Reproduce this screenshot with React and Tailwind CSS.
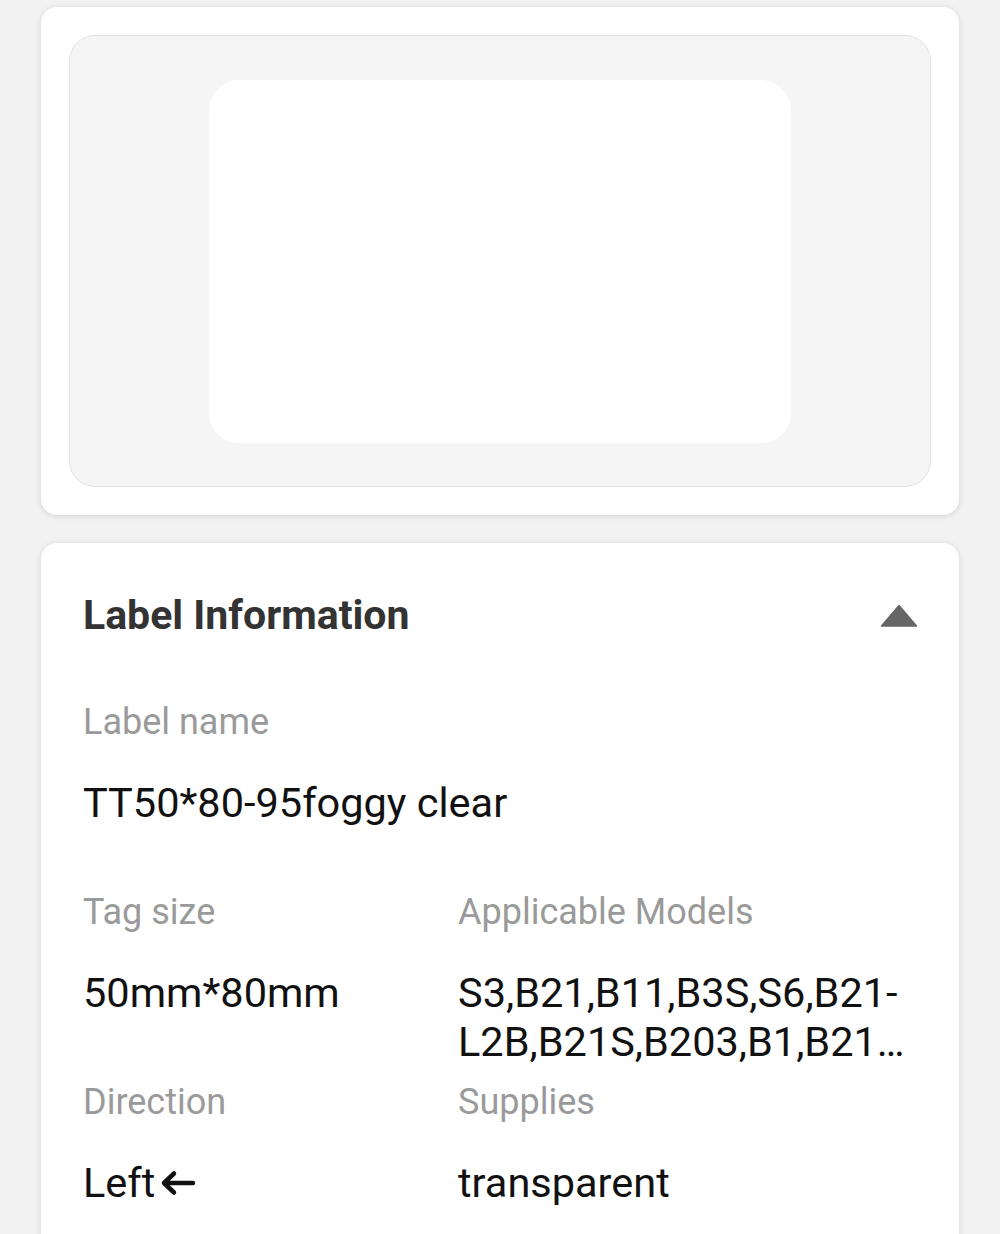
import React from "react";

function Item({ label, children, className = "" }) {
  return (
    <div className={"flex flex-col h-[190px] " + className}>
      <div className="text-[36px] leading-[44px] text-[#9a9a9a]">{label}</div>
      <div className="mt-[34px] text-[41.5px] leading-[49px] text-[#111111]">{children}</div>
    </div>
  );
}

export default function App() {
  return (
    <div
      className="min-h-[1234px] w-[1000px] bg-[#f2f2f2] px-[41px] pt-[7px] pb-[40px]"
      style={{ fontFamily: "Roboto, 'Noto Sans', sans-serif" }}
    >
      <div className="h-[508px] rounded-[16px] bg-white p-[28px] shadow-[0_1px_6px_rgba(0,0,0,0.13)]">
        <div className="flex h-full items-center justify-center rounded-[26px] border border-[#e2e2e2] bg-[#f5f5f5]">
          <div className="h-[363px] w-[582px] rounded-[30px] bg-white" />
        </div>
      </div>

      <div className="mt-[28px] rounded-[16px] bg-white px-[42px] pt-[48px] pb-[40px] shadow-[0_1px_6px_rgba(0,0,0,0.13)]">
        <div className="flex items-center justify-between">
          <div className="text-[41px] font-bold leading-[48px] text-[#333333]">Label Information</div>
          <svg width="38" height="23" viewBox="0 0 38 23" className="mr-[-1px]">
            <path d="M19 1.5 L36.5 22 L1.5 22 Z" fill="#666666" stroke="#666666" strokeWidth="1.5" strokeLinejoin="round" />
          </svg>
        </div>

        <div className="mt-[61px] grid grid-cols-[375px_1fr]">
          <Item label="Label name" className="col-span-2">TT50*80-95foggy clear</Item>
          <Item label="Tag size">50mm*80mm</Item>
          <Item label="Applicable Models">
            <span className="line-clamp-2">S3,B21,B11,B3S,S6,B21-L2B,B21S,B203,B1,B21…</span>
          </Item>
          <Item label="Direction">
            <span className="inline-flex items-center">
              Left
              <svg width="38" height="26" viewBox="0 0 38 26" className="ml-[4px]">
                <path d="M34 13 H6 M15 3.5 L5 13 L15 22.5" fill="none" stroke="#111111" strokeWidth="4.5" strokeLinecap="round" strokeLinejoin="round" />
              </svg>
            </span>
          </Item>
          <Item label="Supplies">transparent</Item>
        </div>
      </div>
    </div>
  );
}
